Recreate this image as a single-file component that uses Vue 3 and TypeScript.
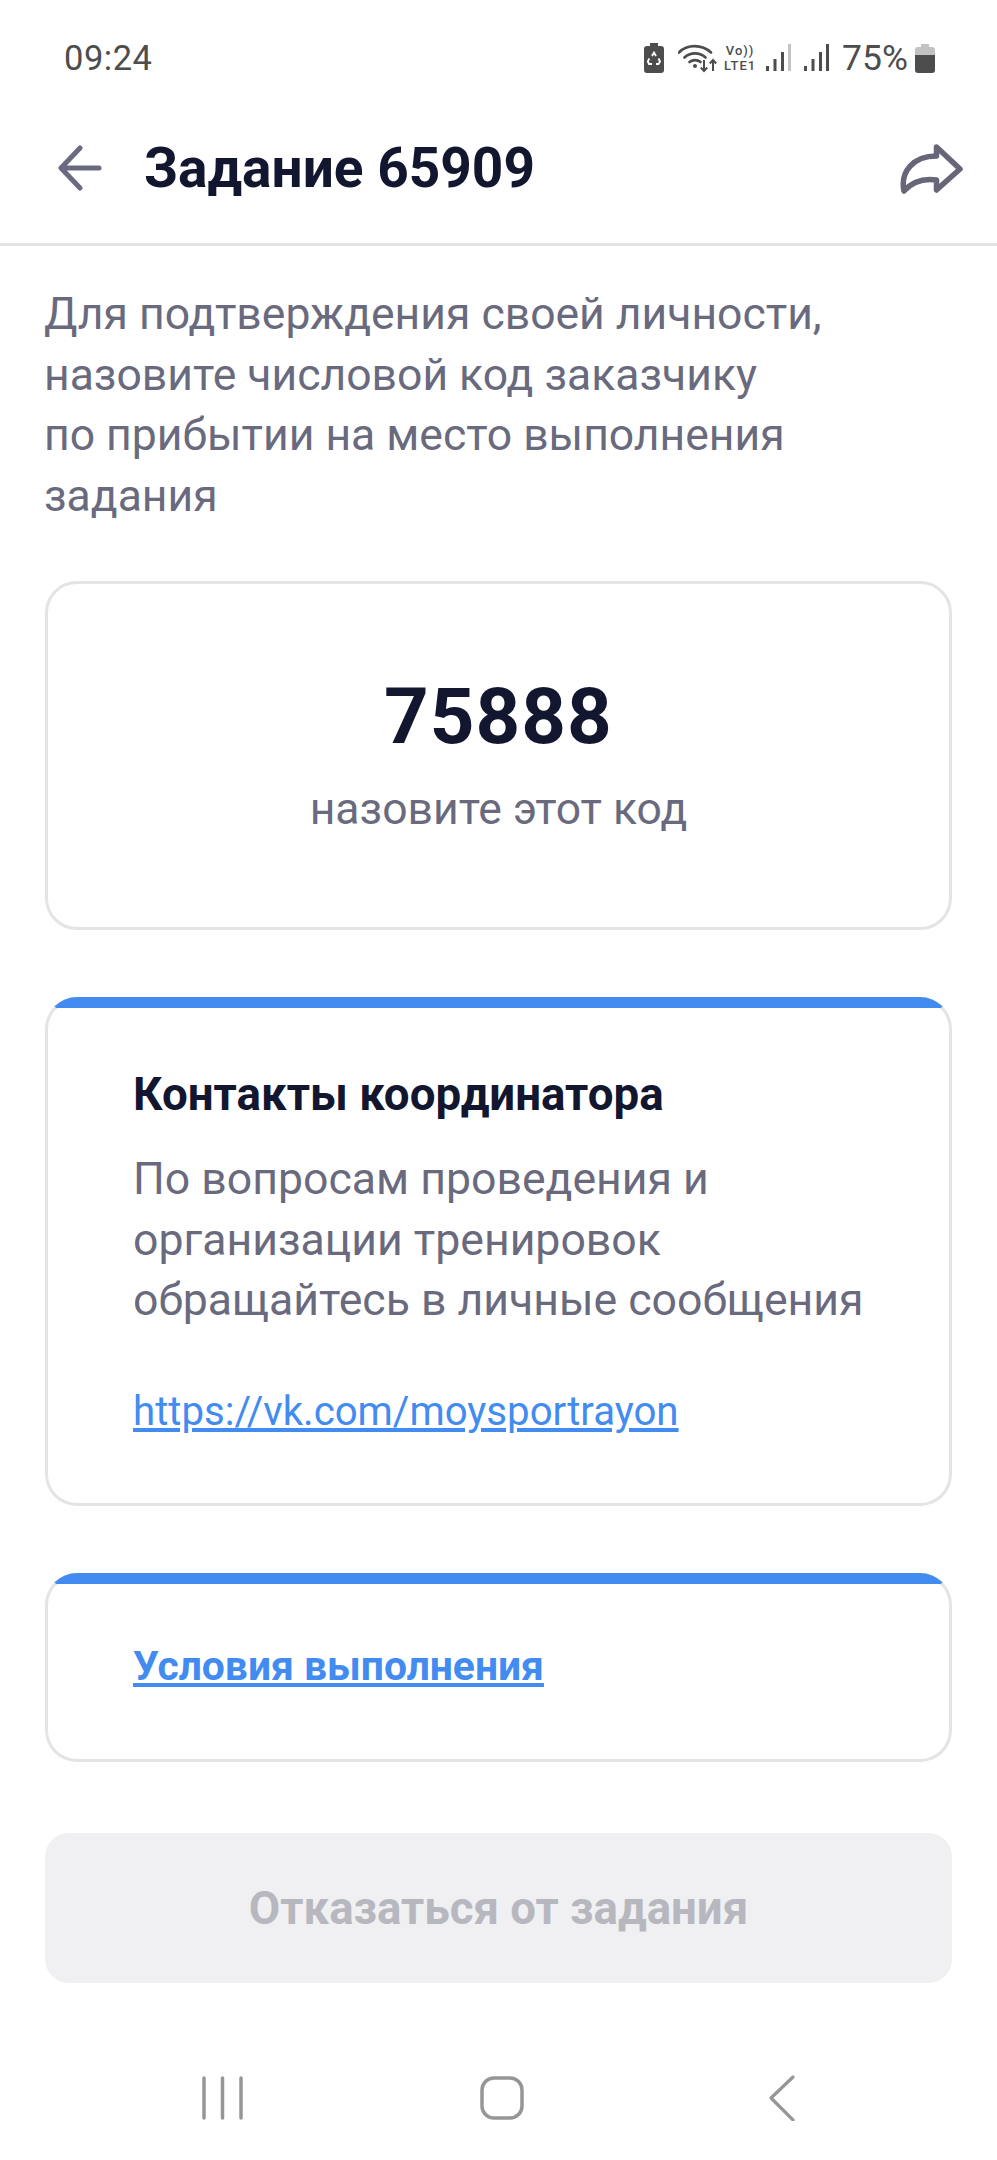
<template>
  <div class="screen">
    <div class="status-bar">
      <span class="clock">09:24</span>
      <div class="status-icons">
        <svg class="ic-saver" width="20" height="30" viewBox="0 0 20 30">
          <path d="M6 0h8v3h3a3 3 0 0 1 3 3v21a3 3 0 0 1-3 3H3a3 3 0 0 1-3-3V6a3 3 0 0 1 3-3h3z" fill="#4d4d4d" />
          <path d="M8 13l2-3.500 2 3.500M14.500 15.500l1.500 3-1.500 2.500H12M8 21H5l-1.200-2.500 1.500-3" fill="none" stroke="#fff" stroke-width="1.800" />
        </svg>
        <svg class="ic-wifi" width="40" height="30" viewBox="0 0 40 30">
          <path d="M1 9.500C9 1 24 1 33 9.500M6.500 14.500C12 9 22 9 27.500 14.500M11.500 19C14.500 16.500 19.500 16.500 22.500 19" fill="none" stroke="#4d4d4d" stroke-width="2.600" stroke-linecap="round" />
          <circle cx="17" cy="23" r="2" fill="#4d4d4d" />
          <path d="M26 17v11M22.800 24.500l3.200 3.500 3.200-3.500M35 28V17M31.800 20.500l3.200-3.500 3.200 3.500" fill="none" stroke="#4d4d4d" stroke-width="2" />
        </svg>
        <div class="volte">
          <span>Vo))</span>
          <span>LTE1</span>
        </div>
        <svg class="ic-signal" width="26" height="28" viewBox="0 0 26 28">
          <rect x="0" y="22" width="3" height="5" fill="#4d4d4d" />
          <rect x="7.500" y="15" width="3" height="12" fill="#4d4d4d" />
          <rect x="15" y="8" width="3" height="19" fill="#4d4d4d" />
          <rect x="22" y="0" width="3" height="27" fill="#c4c4c4" />
        </svg>
        <svg class="ic-signal second" width="26" height="28" viewBox="0 0 26 28">
          <rect x="0" y="22" width="3" height="5" fill="#4d4d4d" />
          <rect x="7.500" y="15" width="3" height="12" fill="#4d4d4d" />
          <rect x="15" y="8" width="3" height="19" fill="#4d4d4d" />
          <rect x="22" y="0" width="3" height="27" fill="#4d4d4d" />
        </svg>
        <span class="percent">75%</span>
        <svg class="ic-battery" width="20" height="29" viewBox="0 0 20 29">
          <path d="M6 0h8v3h3a3 3 0 0 1 3 3v5H0V6a3 3 0 0 1 3-3h3z" fill="#c2c2c2" />
          <path d="M0 11h20v15a3 3 0 0 1-3 3H3a3 3 0 0 1-3-3z" fill="#4d4d4d" />
        </svg>
      </div>
    </div>

    <header class="app-header">
      <svg class="back" width="44" height="46" viewBox="0 0 44 46">
        <path d="M41 23H4M22 3L3 23l19 20" fill="none" stroke="#6a6a80" stroke-width="5" stroke-linecap="round" stroke-linejoin="round" />
      </svg>
      <h1 class="title">Задание {{ taskId }}</h1>
      <svg class="share" width="66" height="52" viewBox="0 0 66 52">
        <path d="M38.500 5L62 27 38.500 48V38C25 36 14 40 6 49 2 30 15 14 38.500 14z" fill="none" stroke="#666678" stroke-width="5.500" stroke-linejoin="round" />
      </svg>
    </header>

    <main class="content">
      <p class="intro">
        Для подтверждения своей личности,<br />
        назовите числовой код заказчику<br />
        по прибытии на место выполнения<br />
        задания
      </p>

      <section class="card code-card">
        <div class="code">{{ code }}</div>
        <div class="code-hint">назовите этот код</div>
      </section>

      <section class="card accent contacts">
        <h2 class="card-title">Контакты координатора</h2>
        <p class="card-text">
          По вопросам проведения и<br />
          организации тренировок<br />
          обращайтесь в личные сообщения
        </p>
        <a class="link" href="#">https://vk.com/moysportrayon</a>
      </section>

      <section class="card accent terms">
        <a class="link strong" href="#">Условия выполнения</a>
      </section>

      <button class="decline" type="button" disabled>Отказаться от задания</button>
    </main>

    <nav class="nav-bar">
      <svg width="44" height="44" viewBox="0 0 44 44">
        <path d="M3 2v40M21.500 2v40M40 2v40" fill="none" stroke="#969696" stroke-width="3.500" stroke-linecap="round" />
      </svg>
      <svg class="nav-home" width="44" height="44" viewBox="0 0 44 44">
        <rect x="2" y="2" width="40" height="40" rx="12" fill="none" stroke="#969696" stroke-width="3.500" />
      </svg>
      <svg class="nav-back" width="30" height="46" viewBox="0 0 30 46">
        <path d="M26 2L4 23l22 22" fill="none" stroke="#969696" stroke-width="3.200" stroke-linecap="round" stroke-linejoin="round" />
      </svg>
    </nav>
  </div>
</template>

<script setup lang="ts">
const taskId: number = 65909
const code: string = '75888'
</script>

<style>
body {
  background: #fff;
}
</style>

<style scoped>
.screen {
  width: 997px;
  height: 2160px;
  display: flex;
  flex-direction: column;
  background: #fff;
  font-family: Roboto, "Noto Sans", sans-serif;
  overflow: hidden;
}

.status-bar {
  height: 102px;
  box-sizing: border-box;
  padding: 14px 62px 0 64px;
  display: flex;
  align-items: center;
  justify-content: space-between;
  color: #4d4d4d;
}
.clock {
  font-size: 34.500px;
  letter-spacing: 0.5px;
}
.status-icons {
  display: flex;
  align-items: center;
}
.ic-wifi {
  margin-left: 14px;
}
.volte {
  margin-left: 4px;
  width: 36px;
  display: flex;
  flex-direction: column;
  font-size: 13px;
  font-weight: 500;
  line-height: 15.500px;
  letter-spacing: 1px;
  text-align: center;
}
.ic-signal {
  margin-left: 8px;
}
.ic-signal.second {
  margin-left: 12px;
}
.percent {
  margin-left: 12px;
  font-size: 35.500px;
}
.ic-battery {
  margin-left: 7px;
}

.app-header {
  height: 144px;
  box-sizing: border-box;
  padding: 0 33px 10px 58px;
  display: flex;
  align-items: center;
  border-bottom: 3px solid #e4e4e6;
}
.title {
  margin: 0 0 0 42px;
  flex: 1;
  font-size: 55px;
  font-weight: 700;
  color: #12172f;
}

.content {
  flex: 1;
  padding: 38px 45px 0;
  display: flex;
  flex-direction: column;
}
.intro {
  margin: 0 0 0 -1px;
  font-size: 44.500px;
  line-height: 60.500px;
  color: #6a6a7e;
}

.card {
  box-sizing: border-box;
  border: 3px solid #e4e4e6;
  border-radius: 32px;
  background: #fff;
}
.accent {
  border-top-color: #428bf0;
  background: linear-gradient(#428bf0 8px, #fff 8px);
}

.code-card {
  margin-top: 55px;
  height: 349px;
  padding-top: 87px;
  text-align: center;
}
.code {
  font-size: 78px;
  line-height: 92px;
  font-weight: 700;
  letter-spacing: 1px;
  color: #12172f;
}
.code-hint {
  margin-top: 21px;
  font-size: 44.500px;
  line-height: 50px;
  color: #6a6a7e;
}

.contacts {
  margin-top: 67px;
  height: 509px;
  padding: 69px 40px 0 85px;
}
.card-title {
  margin: 0;
  font-size: 45.700px;
  line-height: 52px;
  font-weight: 700;
  color: #12172f;
}
.card-text {
  margin: 28px 0 0;
  font-size: 44.600px;
  line-height: 60.600px;
  color: #6a6a7e;
}
.link {
  display: inline-block;
  margin-top: 56px;
  font-size: 40.200px;
  line-height: 50px;
  color: #428bf0;
  text-decoration: underline;
}

.terms {
  margin-top: 67px;
  height: 189px;
  padding: 65px 40px 0 85px;
}
.link.strong {
  margin-top: 0;
  font-size: 40.800px;
  font-weight: 700;
}

.decline {
  margin-top: 71px;
  height: 150px;
  border: none;
  border-radius: 24px;
  background: #f0f0f2;
  font-family: inherit;
  font-size: 45.600px;
  font-weight: 700;
  color: #b7b7bf;
}

.nav-bar {
  height: 110px;
  box-sizing: border-box;
  padding: 0 0 14px 201px;
  display: flex;
  align-items: center;
}
.nav-home {
  margin-left: 235px;
}
.nav-back {
  margin-left: 243px;
}
</style>
